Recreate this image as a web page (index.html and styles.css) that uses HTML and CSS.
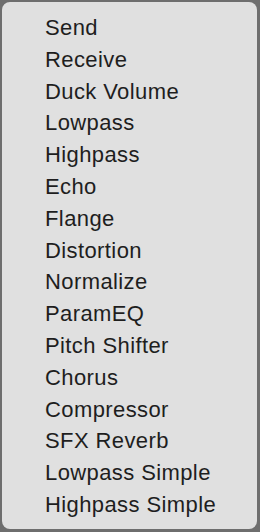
FILE: index.html
```html
<!DOCTYPE html>
<html lang="en">
<head>
    <meta charset="UTF-8">
    <title>Effects menu</title>
    <link rel="stylesheet" href="styles.css">
</head>
<body>
    <ul class="menu">
        <li>Send</li>
        <li>Receive</li>
        <li>Duck Volume</li>
        <li>Lowpass</li>
        <li>Highpass</li>
        <li>Echo</li>
        <li>Flange</li>
        <li>Distortion</li>
        <li>Normalize</li>
        <li>ParamEQ</li>
        <li>Pitch Shifter</li>
        <li>Chorus</li>
        <li>Compressor</li>
        <li>SFX Reverb</li>
        <li>Lowpass Simple</li>
        <li>Highpass Simple</li>
    </ul>
</body>
</html>
```

FILE: styles.css
```css
body {
    margin: 0;
    background: #6e6e6e;
    font-family: "Liberation Sans", Arial, sans-serif;
}
.menu {
    list-style: none;
    margin: 2px 3px 3px 2px;
    padding: 10px 0 0 43px;
    height: 527px;
    box-sizing: border-box;
    background: #e0e0e0;
    border-radius: 8px;
}
.menu li {
    font-size: 22px;
    line-height: 31.8px;
    letter-spacing: 0.4px;
    color: #1e1e1e;
}
```
